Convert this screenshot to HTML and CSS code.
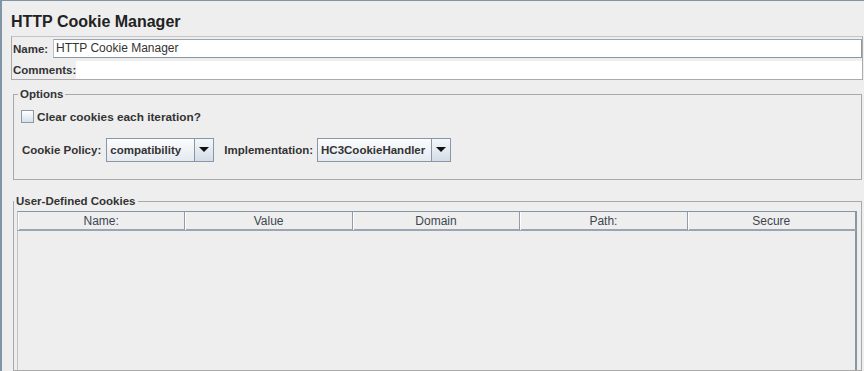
FILE: index.html
```html
<!DOCTYPE html>
<html>
<head>
<meta charset="utf-8">
<link rel="stylesheet" href="styles.css">
</head>
<body>
<div class="window">
  <h1 class="title">HTTP Cookie Manager</h1>
  <div class="info-panel">
    <div class="name-row"><span class="lbl">Name:</span><div class="field">HTTP Cookie Manager</div></div>
    <div class="comments-row"><span class="lbl">Comments:</span><div class="area"></div></div>
  </div>
  <fieldset class="group options">
    <legend>Options</legend>
    <div class="check"><span class="box"></span><span class="lbl check-lbl">Clear cookies each iteration?</span></div>
    <div class="combos">
      <span class="lbl">Cookie Policy:</span>
      <div class="combo policy"><span class="val">compatibility</span><span class="btn"><svg width="10" height="6" viewBox="0 0 10 6"><path d="M0 0H10L5 5Z" fill="#111"/></svg></span></div>
      <span class="lbl impl-lbl">Implementation:</span>
      <div class="combo impl"><span class="val">HC3CookieHandler</span><span class="btn"><svg width="10" height="6" viewBox="0 0 10 6"><path d="M0 0H10L5 5Z" fill="#111"/></svg></span></div>
    </div>
  </fieldset>
  <fieldset class="group cookies">
    <legend>User-Defined Cookies</legend>
    <div class="table">
      <div class="thead">
        <div class="th">Name:</div>
        <div class="th">Value</div>
        <div class="th">Domain</div>
        <div class="th">Path:</div>
        <div class="th">Secure</div>
      </div>
      <div class="tbody"></div>
    </div>
  </fieldset>
</div>
</body>
</html>
```
FILE: styles.css
```css
* { box-sizing: border-box; }
html, body { margin: 0; padding: 0; }
body {
  background: #eeeeee;
  font-family: "Liberation Sans", Arial, sans-serif;
  color: #333333;
  width: 864px;
  height: 371px;
  overflow: hidden;
}
.window {
  height: 371px;
  border-top: 1px solid #8194a6;
  border-left: 2px solid #8194a6;
  padding: 11px 1px 0 9px;
  display: flex;
  flex-direction: column;
}
.title {
  margin: 0;
  font-size: 16px;
  line-height: 20px;
  font-weight: bold;
  color: #222;
}
.lbl {
  font-size: 11.5px;
  font-weight: bold;
  color: #333;
  white-space: nowrap;
}
.check-lbl { font-size: 11.8px; }
.info-panel {
  margin-top: 4px;
  border: 1px solid #ababab;
  border-top-color: #c4c4c4;
}
.name-row {
  display: flex;
  align-items: center;
  padding: 2px 0 2px 1px;
}
.name-row .lbl { width: 40px; }
.field {
  flex: 1;
  height: 19px;
  background: #fff;
  border: 1px solid #8797a6;
  border-top-color: #9aa8b5;
  border-left-color: #b8c2cc;
  font-size: 12px;
  line-height: 17px;
  padding-left: 2px;
  color: #333;
}
.comments-row {
  display: flex;
  align-items: center;
  height: 18px;
  margin-top: 1px;
  padding-left: 1px;
}
.comments-row .lbl { width: 63px; }
.area {
  flex: 1;
  height: 18px;
  background: #fff;
}
.group {
  margin: 7px 1px 0 2px;
  padding: 0 4px 0 7px;
  border: 1px solid #a9a9a9;
  min-width: 0;
}
.group legend {
  margin-left: -3px;
  padding: 0 2px;
  font-size: 11.5px;
  font-weight: bold;
  line-height: 14px;
  color: #333;
}
.options { padding-bottom: 17px; }
.check {
  display: flex;
  align-items: center;
  height: 17px;
  margin-top: 7px;
}
.box {
  width: 13px;
  height: 13px;
  border: 1px solid #8a9aaa;
  background: linear-gradient(#ffffff, #d6e1ec);
  margin-right: 3px;
}
.combos {
  display: flex;
  align-items: center;
  margin-top: 13px;
  margin-left: 1px;
}
.combo {
  display: flex;
  height: 24px;
  border: 1px solid #8797a6;
  background: #eef2f6;
  margin-left: 5px;
}
.combo.policy { width: 108px; }
.combo.impl { width: 134px; margin-left: 4px; }
.impl-lbl { margin-left: 10px; }
.combo .val {
  flex: 1;
  font-size: 11.5px;
  font-weight: bold;
  line-height: 22px;
  padding-left: 3px;
  color: #333;
  background: linear-gradient(#fbfcfd, #e4eaf0);
  white-space: nowrap;
  overflow: hidden;
}
.combo .btn {
  width: 19px;
  border-left: 1px solid #8797a6;
  background: linear-gradient(#f4f7fa, #d3dde7);
  display: flex;
  align-items: center;
  justify-content: center;
}
.cookies {
  margin-top: 14px;
  padding: 3px 4px 0 3px;
  flex: 1;
}
.table {
  display: flex;
  flex-direction: column;
  height: 100%;
}
.thead {
  display: grid;
  grid-template-columns: repeat(5, 1fr);
  height: 20px;
  border-top: 1px solid #8797a6;
  border-bottom: 2px solid #9aa6b2;
  border-left: 1px solid #b7c0c8;
  border-right: 2px solid #8797a6;
}
.th {
  font-size: 12px;
  line-height: 17px;
  padding-top: 1px;
  text-align: center;
  color: #3c4650;
  border-right: 1px solid #8e9cab;
  box-shadow: inset 1px 0 0 #ffffff;
}
.th:last-child { border-right: none; }
.tbody {
  flex: 1;
  border-left: 1px solid #c2c2c2;
  border-right: 2px solid #8797a6;
}
```
